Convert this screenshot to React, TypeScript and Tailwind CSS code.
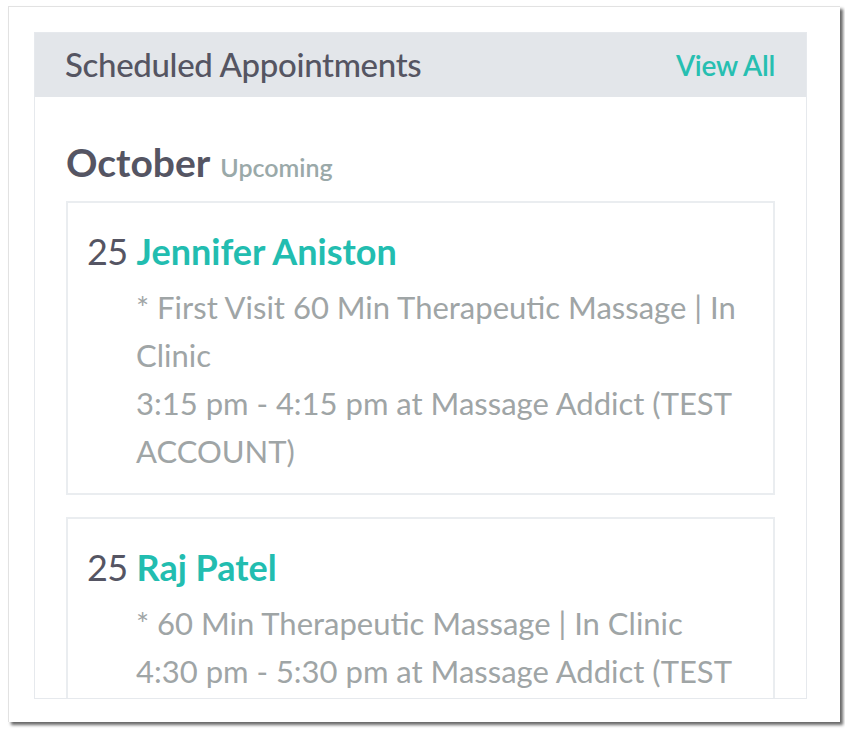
import React from "react";

type Appointment = {
  day: number;
  client: string;
  lines: string[];
};

const appointments: Appointment[] = [
  {
    day: 25,
    client: "Jennifer Aniston",
    lines: [
      "* First Visit 60 Min Therapeutic Massage | In Clinic",
      "3:15 pm - 4:15 pm at Massage Addict (TEST ACCOUNT)",
    ],
  },
  {
    day: 25,
    client: "Raj Patel",
    lines: [
      "* 60 Min Therapeutic Massage | In Clinic",
      "4:30 pm - 5:30 pm at Massage Addict (TEST ACCOUNT)",
    ],
  },
];

export default function App() {
  return (
    <div className="w-[845px] h-[730px] bg-white pt-[6px] pl-[8px] font-['Lato',sans-serif]">
      <div className="w-[832px] h-[716px] bg-white border-t border-l border-[#e2e2e2] shadow-[3px_3px_3px_rgba(0,0,0,0.6)] pt-[25px] pl-[25px]">
        <div className="w-[773px] h-[667px] flex flex-col border border-[#e6e9ed] overflow-hidden">
          <div className="h-[64px] shrink-0 bg-[#e3e6ea] flex items-center justify-between pl-[30px] pr-[31px]">
            <span className="text-[33px] font-medium text-[#555562] tracking-[-0.01em]">
              Scheduled Appointments
            </span>
            <span className="text-[28px] font-semibold text-[#27bfb1] tracking-[-0.01em]">
              View All
            </span>
          </div>
          <div className="flex-1 min-h-0 bg-white pt-[41px] px-[31px]">
            <div className="flex items-baseline gap-[10px] leading-[48px]">
              <span className="text-[39px] font-bold text-[#555563]">October</span>
              <span className="text-[25px] font-semibold text-[#9aa9a9]">Upcoming</span>
            </div>
            <div className="mt-[10px] flex flex-col gap-[22px]">
              {appointments.map((a) => (
                <div
                  key={a.client}
                  className="border-2 border-[#eaedf0] pt-[24px] pb-[18px] pl-[19px] pr-[16px]"
                >
                  <div className="text-[36px] leading-[48px]">
                    <span className="text-[#555563] tracking-[-0.02em]">{a.day}</span>{" "}
                    <span className="font-bold text-[#22bdb0]">{a.client}</span>
                  </div>
                  <div className="mt-[8px] pl-[49px] text-[31px] leading-[48px] text-[#9fa5a6]">
                    {a.lines.map((l) => (
                      <div key={l}>{l}</div>
                    ))}
                  </div>
                </div>
              ))}
            </div>
          </div>
        </div>
      </div>
    </div>
  );
}
